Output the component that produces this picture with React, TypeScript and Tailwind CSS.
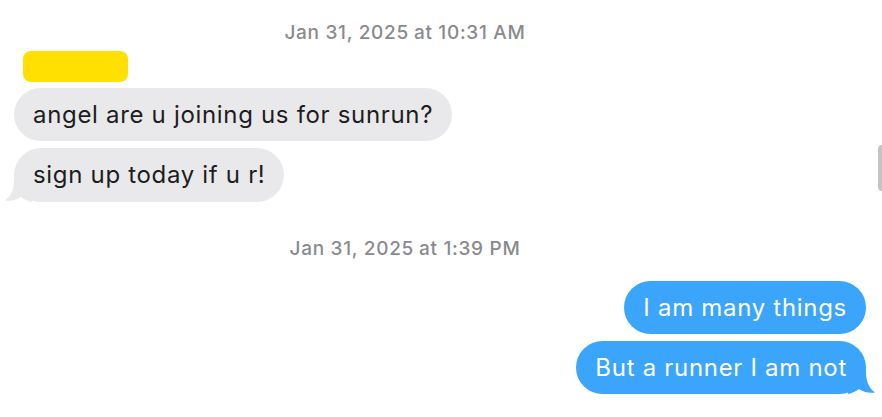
import React from "react";

const font = { fontFamily: "Inter, 'Noto Sans', sans-serif" };

function Stamp({ date, time }: { date: string; time: string }) {
  return (
    <div className="flex justify-center pr-[72px] text-[19px] leading-[20px] font-medium text-[#8a8a8e] tracking-[0.7px]">
      <span>{date}</span>
      <span className="ml-[5px]">{time}</span>
    </div>
  );
}

function LeftTail() {
  return (
    <svg className="absolute left-[-10px] bottom-0" width="28" height="24" viewBox="0 0 28 24">
      <path d="M10 0 C10 11 8 17 1 22.5 C7 23.5 13 22 17 19 C20 21.5 24 23 28 24 L28 0 Z" fill="#e9e9eb" />
    </svg>
  );
}

function RightTail() {
  return (
    <svg className="absolute right-[-10px] bottom-0" width="28" height="24" viewBox="0 0 28 24">
      <path d="M18 0 C18 11 20 17 27 22.5 C21 23.5 15 22 11 19 C8 21.5 4 23 0 24 L0 0 Z" fill="#3aa5fb" />
    </svg>
  );
}

export default function App() {
  return (
    <div className="w-[882px] h-[417px] bg-white relative overflow-hidden text-[#1d1d1f]" style={font}>
      <div className="flex flex-col pt-[23px]">
        <Stamp date="Jan 31, 2025" time="at 10:31 AM" />
        <div className="ml-[23px] mt-[8px] w-[105px] h-[31px] rounded-[8px] bg-[#ffe000]" />
        <div className="flex flex-col items-start pl-[14px] mt-[6px] gap-[7px]">
          <div className="h-[53px] flex items-center px-[19px] rounded-[27px] bg-[#e9e9eb] text-[24px] tracking-[0.68px]">
            angel are u joining us for sunrun?
          </div>
          <div className="relative h-[54px] flex items-center px-[19px] rounded-[27px] bg-[#e9e9eb] text-[24px] tracking-[0.68px]">
            <LeftTail />
            <span className="relative">sign up today if u r!</span>
          </div>
        </div>
        <div className="mt-[37px]">
          <Stamp date="Jan 31, 2025" time="at 1:39 PM" />
        </div>
        <div className="flex flex-col items-end pr-[16px] mt-[22px] gap-[7px]">
          <div className="h-[53px] flex items-center px-[19px] rounded-[27px] bg-[#3aa5fb] text-white text-[24px] tracking-[0.7px]">
            I am many things
          </div>
          <div className="relative h-[53px] flex items-center px-[19px] rounded-[27px] bg-[#3aa5fb] text-white text-[24px] tracking-[0.7px]">
            <RightTail />
            <span className="relative">But a runner I am not</span>
          </div>
        </div>
      </div>
      <div className="absolute left-[878px] top-[145px] w-[4px] h-[46px] rounded-l-full bg-[#c4c4c4]" />
    </div>
  );
}
